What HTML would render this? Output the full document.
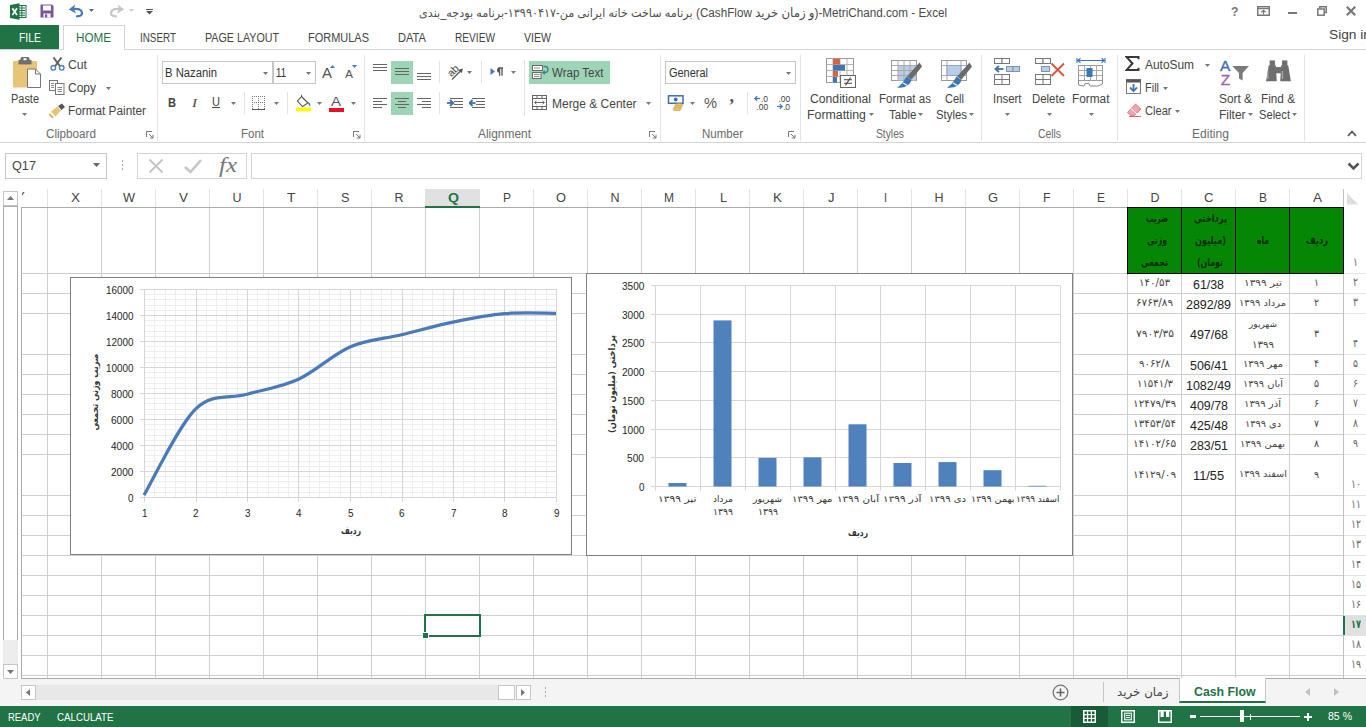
<!DOCTYPE html>
<html lang="fa">
<head>
<meta charset="utf-8">
<title>Excel - Cash Flow</title>
<style>
html,body{margin:0;padding:0}
body{width:1366px;height:727px;overflow:hidden;position:relative;background:#fff;font-family:"Liberation Sans","DejaVu Sans",sans-serif;font-size:12px;color:#444}
.b{position:absolute;display:block}
.t{position:absolute;display:block;white-space:nowrap;transform-origin:0 50%}
#bot{position:absolute;left:0;top:679px;width:1366px;height:27px;background:#f4f4f4}
</style>
</head>
<body>
<div id="bot"></div>
<svg class="b" style="left:0;top:0" width="1366" height="727" viewBox="0 0 1366 727"><rect x="47" y="189" width="1" height="18" fill="#e3e3e3"/><rect x="47" y="207" width="1" height="471" fill="#cecece"/><rect x="101" y="189" width="1" height="18" fill="#e3e3e3"/><rect x="101" y="207" width="1" height="471" fill="#cecece"/><rect x="155" y="189" width="1" height="18" fill="#e3e3e3"/><rect x="155" y="207" width="1" height="471" fill="#cecece"/><rect x="209" y="189" width="1" height="18" fill="#e3e3e3"/><rect x="209" y="207" width="1" height="471" fill="#cecece"/><rect x="263" y="189" width="1" height="18" fill="#e3e3e3"/><rect x="263" y="207" width="1" height="471" fill="#cecece"/><rect x="317" y="189" width="1" height="18" fill="#e3e3e3"/><rect x="317" y="207" width="1" height="471" fill="#cecece"/><rect x="371" y="189" width="1" height="18" fill="#e3e3e3"/><rect x="371" y="207" width="1" height="471" fill="#cecece"/><rect x="425" y="189" width="1" height="18" fill="#e3e3e3"/><rect x="425" y="207" width="1" height="471" fill="#cecece"/><rect x="479" y="189" width="1" height="18" fill="#e3e3e3"/><rect x="479" y="207" width="1" height="471" fill="#cecece"/><rect x="533" y="189" width="1" height="18" fill="#e3e3e3"/><rect x="533" y="207" width="1" height="471" fill="#cecece"/><rect x="587" y="189" width="1" height="18" fill="#e3e3e3"/><rect x="587" y="207" width="1" height="471" fill="#cecece"/><rect x="641" y="189" width="1" height="18" fill="#e3e3e3"/><rect x="641" y="207" width="1" height="471" fill="#cecece"/><rect x="695" y="189" width="1" height="18" fill="#e3e3e3"/><rect x="695" y="207" width="1" height="471" fill="#cecece"/><rect x="749" y="189" width="1" height="18" fill="#e3e3e3"/><rect x="749" y="207" width="1" height="471" fill="#cecece"/><rect x="803" y="189" width="1" height="18" fill="#e3e3e3"/><rect x="803" y="207" width="1" height="471" fill="#cecece"/><rect x="857" y="189" width="1" height="18" fill="#e3e3e3"/><rect x="857" y="207" width="1" height="471" fill="#cecece"/><rect x="911" y="189" width="1" height="18" fill="#e3e3e3"/><rect x="911" y="207" width="1" height="471" fill="#cecece"/><rect x="965" y="189" width="1" height="18" fill="#e3e3e3"/><rect x="965" y="207" width="1" height="471" fill="#cecece"/><rect x="1019" y="189" width="1" height="18" fill="#e3e3e3"/><rect x="1019" y="207" width="1" height="471" fill="#cecece"/><rect x="1073" y="189" width="1" height="18" fill="#e3e3e3"/><rect x="1073" y="207" width="1" height="471" fill="#cecece"/><rect x="1127" y="189" width="1" height="18" fill="#e3e3e3"/><rect x="1127" y="207" width="1" height="471" fill="#cecece"/><rect x="1181" y="189" width="1" height="18" fill="#e3e3e3"/><rect x="1181" y="207" width="1" height="471" fill="#cecece"/><rect x="1235" y="189" width="1" height="18" fill="#e3e3e3"/><rect x="1235" y="207" width="1" height="471" fill="#cecece"/><rect x="1289" y="189" width="1" height="18" fill="#e3e3e3"/><rect x="1289" y="207" width="1" height="471" fill="#cecece"/><rect x="1343" y="189" width="1" height="18" fill="#e3e3e3"/><rect x="1343" y="207" width="1" height="471" fill="#cecece"/><rect x="21" y="273" width="1322" height="1" fill="#cecece"/><rect x="1344" y="273" width="22" height="1" fill="#e3e3e3"/><rect x="21" y="293" width="1322" height="1" fill="#cecece"/><rect x="1344" y="293" width="22" height="1" fill="#e3e3e3"/><rect x="21" y="313" width="1322" height="1" fill="#cecece"/><rect x="1344" y="313" width="22" height="1" fill="#e3e3e3"/><rect x="21" y="354" width="1322" height="1" fill="#cecece"/><rect x="1344" y="354" width="22" height="1" fill="#e3e3e3"/><rect x="21" y="374" width="1322" height="1" fill="#cecece"/><rect x="1344" y="374" width="22" height="1" fill="#e3e3e3"/><rect x="21" y="394" width="1322" height="1" fill="#cecece"/><rect x="1344" y="394" width="22" height="1" fill="#e3e3e3"/><rect x="21" y="414" width="1322" height="1" fill="#cecece"/><rect x="1344" y="414" width="22" height="1" fill="#e3e3e3"/><rect x="21" y="434" width="1322" height="1" fill="#cecece"/><rect x="1344" y="434" width="22" height="1" fill="#e3e3e3"/><rect x="21" y="454" width="1322" height="1" fill="#cecece"/><rect x="1344" y="454" width="22" height="1" fill="#e3e3e3"/><rect x="21" y="495" width="1322" height="1" fill="#cecece"/><rect x="1344" y="495" width="22" height="1" fill="#e3e3e3"/><rect x="21" y="515" width="1322" height="1" fill="#cecece"/><rect x="1344" y="515" width="22" height="1" fill="#e3e3e3"/><rect x="21" y="535" width="1322" height="1" fill="#cecece"/><rect x="1344" y="535" width="22" height="1" fill="#e3e3e3"/><rect x="21" y="555" width="1322" height="1" fill="#cecece"/><rect x="1344" y="555" width="22" height="1" fill="#e3e3e3"/><rect x="21" y="575" width="1322" height="1" fill="#cecece"/><rect x="1344" y="575" width="22" height="1" fill="#e3e3e3"/><rect x="21" y="595" width="1322" height="1" fill="#cecece"/><rect x="1344" y="595" width="22" height="1" fill="#e3e3e3"/><rect x="21" y="615" width="1322" height="1" fill="#cecece"/><rect x="1344" y="615" width="22" height="1" fill="#e3e3e3"/><rect x="21" y="635" width="1322" height="1" fill="#cecece"/><rect x="1344" y="635" width="22" height="1" fill="#e3e3e3"/><rect x="21" y="655" width="1322" height="1" fill="#cecece"/><rect x="1344" y="655" width="22" height="1" fill="#e3e3e3"/><rect x="21" y="675" width="1322" height="1" fill="#cecece"/><rect x="1344" y="675" width="22" height="1" fill="#e3e3e3"/><rect x="21" y="207" width="1323" height="1" fill="#ababab"/><rect x="21" y="207" width="1" height="471" fill="#ababab"/><rect x="21" y="678" width="1345" height="1" fill="#ababab"/><rect x="1343" y="189" width="1" height="489" fill="#c0c0c0"/><path d="M1347 193.5L1358.5 204.5H1347Z" fill="#dedede"/></svg>
<div class="b" style="left:425px;top:189px;width:55px;height:18px;background:#e1e1e1;border-bottom:2px solid #217346;box-sizing:content-box;height:17px"></div>
<span class="t" style="left:70.5px;top:189.5px;line-height:16px;font-size:12.5px;color:#444;transform:scaleX(1.079);">X</span>
<span class="t" style="left:123.0px;top:189.5px;line-height:16px;font-size:12.5px;color:#444;transform:scaleX(1.016);">W</span>
<span class="t" style="left:178.5px;top:189.5px;line-height:16px;font-size:12.5px;color:#444;transform:scaleX(1.079);">V</span>
<span class="t" style="left:232.5px;top:189.5px;line-height:16px;font-size:12.5px;color:#444;">U</span>
<span class="t" style="left:286.75px;top:189.5px;line-height:16px;font-size:12.5px;color:#444;transform:scaleX(1.112);">T</span>
<span class="t" style="left:340.75px;top:189.5px;line-height:16px;font-size:12.5px;color:#444;transform:scaleX(1.019);">S</span>
<span class="t" style="left:394.5px;top:189.5px;line-height:16px;font-size:12.5px;color:#444;">R</span>
<span class="t" style="left:447.5px;top:189.5px;line-height:16px;font-size:12.5px;color:#217346;font-weight:700;transform:scaleX(1.130);">Q</span>
<span class="t" style="left:503.0px;top:189.5px;line-height:16px;font-size:12.5px;color:#444;transform:scaleX(0.959);">P</span>
<span class="t" style="left:556.0px;top:189.5px;line-height:16px;font-size:12.5px;color:#444;transform:scaleX(1.027);">O</span>
<span class="t" style="left:610.5px;top:189.5px;line-height:16px;font-size:12.5px;color:#444;">N</span>
<span class="t" style="left:664.0px;top:189.5px;line-height:16px;font-size:12.5px;color:#444;transform:scaleX(0.960);">M</span>
<span class="t" style="left:719.5px;top:189.5px;line-height:16px;font-size:12.5px;color:#444;transform:scaleX(1.007);">L</span>
<span class="t" style="left:772.5px;top:189.5px;line-height:16px;font-size:12.5px;color:#444;transform:scaleX(1.079);">K</span>
<span class="t" style="left:827.75px;top:189.5px;line-height:16px;font-size:12.5px;color:#444;transform:scaleX(1.040);">J</span>
<span class="t" style="left:883.5px;top:189.5px;line-height:16px;font-size:12.5px;color:#444;transform:scaleX(0.861);">I</span>
<span class="t" style="left:934.5px;top:189.5px;line-height:16px;font-size:12.5px;color:#444;">H</span>
<span class="t" style="left:988.0px;top:189.5px;line-height:16px;font-size:12.5px;color:#444;transform:scaleX(1.027);">G</span>
<span class="t" style="left:1043.25px;top:189.5px;line-height:16px;font-size:12.5px;color:#444;transform:scaleX(0.982);">F</span>
<span class="t" style="left:1097.0px;top:189.5px;line-height:16px;font-size:12.5px;color:#444;transform:scaleX(0.959);">E</span>
<span class="t" style="left:1150.5px;top:189.5px;line-height:16px;font-size:12.5px;color:#444;">D</span>
<span class="t" style="left:1204.25px;top:189.5px;line-height:16px;font-size:12.5px;color:#444;transform:scaleX(1.052);">C</span>
<span class="t" style="left:1259.0px;top:189.5px;line-height:16px;font-size:12.5px;color:#444;transform:scaleX(0.959);">B</span>
<span class="t" style="left:1312.5px;top:189.5px;line-height:16px;font-size:12.5px;color:#444;transform:scaleX(1.079);">A</span>
<div class="b" style="left:22px;top:189px;width:25px;height:18px;overflow:hidden"><span class="t" style="left:-6px;top:-1px;line-height:18px;font-size:13px;color:#444">Y</span></div>
<div class="b" style="left:1343px;top:616px;width:23px;height:19px;background:#e1e1e1;border-left:2px solid #217346;box-sizing:border-box"></div>
<span class="t" dir="rtl" style="left:1353.0px;top:255.0px;line-height:15px;font-size:11.5px;color:#666;font-family:'DejaVu Sans','Liberation Sans',sans-serif;transform:scaleX(0.808);">۱</span>
<span class="t" dir="rtl" style="left:1353.0px;top:275.0px;line-height:15px;font-size:11.5px;color:#666;font-family:'DejaVu Sans','Liberation Sans',sans-serif;transform:scaleX(0.808);">۲</span>
<span class="t" dir="rtl" style="left:1353.0px;top:295.0px;line-height:15px;font-size:11.5px;color:#666;font-family:'DejaVu Sans','Liberation Sans',sans-serif;transform:scaleX(0.808);">۳</span>
<span class="t" dir="rtl" style="left:1353.0px;top:336.0px;line-height:15px;font-size:11.5px;color:#666;font-family:'DejaVu Sans','Liberation Sans',sans-serif;transform:scaleX(0.808);">۴</span>
<span class="t" dir="rtl" style="left:1353.0px;top:356.0px;line-height:15px;font-size:11.5px;color:#666;font-family:'DejaVu Sans','Liberation Sans',sans-serif;transform:scaleX(0.808);">۵</span>
<span class="t" dir="rtl" style="left:1353.0px;top:376.0px;line-height:15px;font-size:11.5px;color:#666;font-family:'DejaVu Sans','Liberation Sans',sans-serif;transform:scaleX(0.808);">۶</span>
<span class="t" dir="rtl" style="left:1353.0px;top:396.0px;line-height:15px;font-size:11.5px;color:#666;font-family:'DejaVu Sans','Liberation Sans',sans-serif;transform:scaleX(0.808);">۷</span>
<span class="t" dir="rtl" style="left:1353.0px;top:416.0px;line-height:15px;font-size:11.5px;color:#666;font-family:'DejaVu Sans','Liberation Sans',sans-serif;transform:scaleX(0.808);">۸</span>
<span class="t" dir="rtl" style="left:1353.0px;top:436.0px;line-height:15px;font-size:11.5px;color:#666;font-family:'DejaVu Sans','Liberation Sans',sans-serif;transform:scaleX(0.808);">۹</span>
<span class="t" dir="rtl" style="left:1350.5px;top:477.0px;line-height:15px;font-size:11.5px;color:#666;font-family:'DejaVu Sans','Liberation Sans',sans-serif;transform:scaleX(0.809);">۱۰</span>
<span class="t" dir="rtl" style="left:1350.5px;top:497.0px;line-height:15px;font-size:11.5px;color:#666;font-family:'DejaVu Sans','Liberation Sans',sans-serif;transform:scaleX(0.809);">۱۱</span>
<span class="t" dir="rtl" style="left:1350.5px;top:517.0px;line-height:15px;font-size:11.5px;color:#666;font-family:'DejaVu Sans','Liberation Sans',sans-serif;transform:scaleX(0.809);">۱۲</span>
<span class="t" dir="rtl" style="left:1350.5px;top:537.0px;line-height:15px;font-size:11.5px;color:#666;font-family:'DejaVu Sans','Liberation Sans',sans-serif;transform:scaleX(0.809);">۱۳</span>
<span class="t" dir="rtl" style="left:1350.5px;top:557.0px;line-height:15px;font-size:11.5px;color:#666;font-family:'DejaVu Sans','Liberation Sans',sans-serif;transform:scaleX(0.809);">۱۴</span>
<span class="t" dir="rtl" style="left:1350.5px;top:577.0px;line-height:15px;font-size:11.5px;color:#666;font-family:'DejaVu Sans','Liberation Sans',sans-serif;transform:scaleX(0.809);">۱۵</span>
<span class="t" dir="rtl" style="left:1350.5px;top:597.0px;line-height:15px;font-size:11.5px;color:#666;font-family:'DejaVu Sans','Liberation Sans',sans-serif;transform:scaleX(0.809);">۱۶</span>
<span class="t" dir="rtl" style="left:1350.5px;top:617.0px;line-height:15px;font-size:11.5px;color:#217346;font-weight:700;font-family:'DejaVu Sans','Liberation Sans',sans-serif;transform:scaleX(0.712);">۱۷</span>
<span class="t" dir="rtl" style="left:1350.5px;top:637.0px;line-height:15px;font-size:11.5px;color:#666;font-family:'DejaVu Sans','Liberation Sans',sans-serif;transform:scaleX(0.809);">۱۸</span>
<span class="t" dir="rtl" style="left:1350.5px;top:657.0px;line-height:15px;font-size:11.5px;color:#666;font-family:'DejaVu Sans','Liberation Sans',sans-serif;transform:scaleX(0.809);">۱۹</span>
<div class="b" style="left:424px;top:614px;width:57px;height:23px;border:2px solid #217346;box-sizing:border-box"></div>
<div class="b" style="left:422px;top:632px;width:7px;height:7px;background:#217346;border:1px solid #fff;box-sizing:border-box"></div>
<div class="b" style="left:1127px;top:207px;width:217px;height:67px;background:#058605;border:1px solid #000;box-sizing:border-box"></div>
<div class="b" style="left:1181px;top:207px;width:1px;height:67px;background:#000"></div>
<div class="b" style="left:1235px;top:207px;width:1px;height:67px;background:#000"></div>
<div class="b" style="left:1289px;top:207px;width:1px;height:67px;background:#000"></div>
<span class="t" dir="rtl" style="left:1305.5px;top:234.0px;line-height:14px;font-size:11px;color:#012b01;font-weight:700;font-family:'DejaVu Sans','Liberation Sans',sans-serif;transform:scaleX(0.753);">ردیف</span>
<span class="t" dir="rtl" style="left:1256.5px;top:234.0px;line-height:14px;font-size:11px;color:#012b01;font-weight:700;font-family:'DejaVu Sans','Liberation Sans',sans-serif;transform:scaleX(0.688);">ماه</span>
<span class="t" dir="rtl" style="left:1193.5px;top:212.0px;line-height:14px;font-size:11px;color:#012b01;font-weight:700;font-family:'DejaVu Sans','Liberation Sans',sans-serif;transform:scaleX(0.751);">پرداختی</span>
<span class="t" dir="rtl" style="left:1195.0px;top:234.0px;line-height:14px;font-size:11px;color:#012b01;font-weight:700;font-family:'DejaVu Sans','Liberation Sans',sans-serif;transform:scaleX(0.745);">(میلیون</span>
<span class="t" dir="rtl" style="left:1196.5px;top:256.0px;line-height:14px;font-size:11px;color:#012b01;font-weight:700;font-family:'DejaVu Sans','Liberation Sans',sans-serif;transform:scaleX(0.714);">تومان)</span>
<span class="t" dir="rtl" style="left:1146.0px;top:212.0px;line-height:14px;font-size:11px;color:#012b01;font-weight:700;font-family:'DejaVu Sans','Liberation Sans',sans-serif;transform:scaleX(0.662);">ضریب</span>
<span class="t" dir="rtl" style="left:1146.5px;top:234.0px;line-height:14px;font-size:11px;color:#012b01;font-weight:700;font-family:'DejaVu Sans','Liberation Sans',sans-serif;transform:scaleX(0.703);">وزنی</span>
<span class="t" dir="rtl" style="left:1141.0px;top:256.0px;line-height:14px;font-size:11px;color:#012b01;font-weight:700;font-family:'DejaVu Sans','Liberation Sans',sans-serif;transform:scaleX(0.734);">تجمعی</span>
<span class="t" dir="rtl" style="left:1314.0px;top:276.0px;line-height:13px;font-size:10px;color:#444;font-family:'DejaVu Sans','Liberation Sans',sans-serif;transform:scaleX(0.930);">۱</span>
<span class="t" dir="rtl" style="left:1243.5px;top:276.5px;line-height:12px;font-size:9.5px;color:#444;font-family:'DejaVu Sans','Liberation Sans',sans-serif;transform:scaleX(1.111);">تیر ۱۳۹۹</span>
<span class="t" style="left:1193.0px;top:276.5px;line-height:16px;font-size:12.5px;color:#222;transform:scaleX(0.991);">61/38</span>
<span class="t" dir="rtl" style="left:1139.0px;top:276.0px;line-height:13px;font-size:10px;color:#444;font-family:'DejaVu Sans','Liberation Sans',sans-serif;transform:scaleX(1.025);">۱۴۰/۵۳</span>
<span class="t" dir="rtl" style="left:1314.0px;top:296.0px;line-height:13px;font-size:10px;color:#444;font-family:'DejaVu Sans','Liberation Sans',sans-serif;transform:scaleX(0.930);">۲</span>
<span class="t" dir="rtl" style="left:1239.0px;top:296.5px;line-height:12px;font-size:9.5px;color:#444;font-family:'DejaVu Sans','Liberation Sans',sans-serif;transform:scaleX(1.047);">مرداد ۱۳۹۹</span>
<span class="t" style="left:1186.0px;top:296.5px;line-height:16px;font-size:12.5px;color:#222;transform:scaleX(0.996);">2892/89</span>
<span class="t" dir="rtl" style="left:1136.0px;top:296.0px;line-height:13px;font-size:10px;color:#444;font-family:'DejaVu Sans','Liberation Sans',sans-serif;transform:scaleX(1.039);">۶۷۶۳/۸۹</span>
<span class="t" dir="rtl" style="left:1314.0px;top:326.5px;line-height:13px;font-size:10px;color:#444;font-family:'DejaVu Sans','Liberation Sans',sans-serif;transform:scaleX(0.930);">۳</span>
<span class="t" dir="rtl" style="left:1248.5px;top:318.0px;line-height:12px;font-size:9px;color:#444;font-family:'DejaVu Sans','Liberation Sans',sans-serif;transform:scaleX(0.994);">شهریور</span>
<span class="t" dir="rtl" style="left:1251.5px;top:337.5px;line-height:13px;font-size:10px;color:#444;font-family:'DejaVu Sans','Liberation Sans',sans-serif;transform:scaleX(1.024);">۱۳۹۹</span>
<span class="t" style="left:1189.5px;top:327.0px;line-height:16px;font-size:12.5px;color:#222;transform:scaleX(0.994);">497/68</span>
<span class="t" dir="rtl" style="left:1135.5px;top:326.5px;line-height:13px;font-size:10px;color:#444;font-family:'DejaVu Sans','Liberation Sans',sans-serif;transform:scaleX(1.067);">۷۹۰۳/۳۵</span>
<span class="t" dir="rtl" style="left:1314.0px;top:357.0px;line-height:13px;font-size:10px;color:#444;font-family:'DejaVu Sans','Liberation Sans',sans-serif;transform:scaleX(0.930);">۴</span>
<span class="t" dir="rtl" style="left:1242.5px;top:357.5px;line-height:12px;font-size:9.5px;color:#444;font-family:'DejaVu Sans','Liberation Sans',sans-serif;transform:scaleX(1.048);">مهر ۱۳۹۹</span>
<span class="t" style="left:1189.5px;top:357.5px;line-height:16px;font-size:12.5px;color:#222;transform:scaleX(0.994);">506/41</span>
<span class="t" dir="rtl" style="left:1139.0px;top:357.0px;line-height:13px;font-size:10px;color:#444;font-family:'DejaVu Sans','Liberation Sans',sans-serif;transform:scaleX(1.025);">۹۰۶۲/۸</span>
<span class="t" dir="rtl" style="left:1314.0px;top:377.0px;line-height:13px;font-size:10px;color:#444;font-family:'DejaVu Sans','Liberation Sans',sans-serif;transform:scaleX(0.930);">۵</span>
<span class="t" dir="rtl" style="left:1242.5px;top:377.5px;line-height:12px;font-size:9.5px;color:#444;font-family:'DejaVu Sans','Liberation Sans',sans-serif;transform:scaleX(1.036);">آبان ۱۳۹۹</span>
<span class="t" style="left:1186.0px;top:377.5px;line-height:16px;font-size:12.5px;color:#222;transform:scaleX(0.996);">1082/49</span>
<span class="t" dir="rtl" style="left:1136.5px;top:377.0px;line-height:13px;font-size:10px;color:#444;font-family:'DejaVu Sans','Liberation Sans',sans-serif;transform:scaleX(1.011);">۱۱۵۴۱/۳</span>
<span class="t" dir="rtl" style="left:1314.0px;top:397.0px;line-height:13px;font-size:10px;color:#444;font-family:'DejaVu Sans','Liberation Sans',sans-serif;transform:scaleX(0.930);">۶</span>
<span class="t" dir="rtl" style="left:1244.0px;top:397.5px;line-height:12px;font-size:9.5px;color:#444;font-family:'DejaVu Sans','Liberation Sans',sans-serif;transform:scaleX(1.060);">آذر ۱۳۹۹</span>
<span class="t" style="left:1189.5px;top:397.5px;line-height:16px;font-size:12.5px;color:#222;transform:scaleX(0.994);">409/78</span>
<span class="t" dir="rtl" style="left:1133.0px;top:397.0px;line-height:13px;font-size:10px;color:#444;font-family:'DejaVu Sans','Liberation Sans',sans-serif;transform:scaleX(1.050);">۱۲۴۷۹/۳۹</span>
<span class="t" dir="rtl" style="left:1314.0px;top:417.0px;line-height:13px;font-size:10px;color:#444;font-family:'DejaVu Sans','Liberation Sans',sans-serif;transform:scaleX(0.930);">۷</span>
<span class="t" dir="rtl" style="left:1244.5px;top:417.5px;line-height:12px;font-size:9.5px;color:#444;font-family:'DejaVu Sans','Liberation Sans',sans-serif;transform:scaleX(1.025);">دی ۱۳۹۹</span>
<span class="t" style="left:1189.5px;top:417.5px;line-height:16px;font-size:12.5px;color:#222;transform:scaleX(0.994);">425/48</span>
<span class="t" dir="rtl" style="left:1133.0px;top:417.0px;line-height:13px;font-size:10px;color:#444;font-family:'DejaVu Sans','Liberation Sans',sans-serif;transform:scaleX(1.050);">۱۳۴۵۳/۵۴</span>
<span class="t" dir="rtl" style="left:1314.0px;top:437.0px;line-height:13px;font-size:10px;color:#444;font-family:'DejaVu Sans','Liberation Sans',sans-serif;transform:scaleX(0.930);">۸</span>
<span class="t" dir="rtl" style="left:1240.0px;top:437.5px;line-height:12px;font-size:9.5px;color:#444;font-family:'DejaVu Sans','Liberation Sans',sans-serif;transform:scaleX(1.042);">بهمن ۱۳۹۹</span>
<span class="t" style="left:1189.5px;top:437.5px;line-height:16px;font-size:12.5px;color:#222;transform:scaleX(0.994);">283/51</span>
<span class="t" dir="rtl" style="left:1133.0px;top:437.0px;line-height:13px;font-size:10px;color:#444;font-family:'DejaVu Sans','Liberation Sans',sans-serif;transform:scaleX(1.050);">۱۴۱۰۲/۶۵</span>
<span class="t" dir="rtl" style="left:1314.0px;top:467.5px;line-height:13px;font-size:10px;color:#444;font-family:'DejaVu Sans','Liberation Sans',sans-serif;transform:scaleX(0.930);">۹</span>
<span class="t" dir="rtl" style="left:1238.5px;top:468.0px;line-height:12px;font-size:9.5px;color:#444;font-family:'DejaVu Sans','Liberation Sans',sans-serif;transform:scaleX(1.028);">اسفند ۱۳۹۹</span>
<span class="t" style="left:1193.0px;top:468.0px;line-height:16px;font-size:12.5px;color:#222;transform:scaleX(1.021);">11/55</span>
<span class="t" dir="rtl" style="left:1133.0px;top:467.5px;line-height:13px;font-size:10px;color:#444;font-family:'DejaVu Sans','Liberation Sans',sans-serif;transform:scaleX(1.050);">۱۴۱۲۹/۰۹</span>
<div class="b" style="left:70px;top:277px;width:502px;height:278px;background:#fff;border:1px solid #808080;box-sizing:border-box"></div>
<svg class="b" style="left:0;top:0" width="1366" height="727" viewBox="0 0 1366 727"><path d="M154.5 289V497" stroke="#eeeeee"/><path d="M165.5 289V497" stroke="#eeeeee"/><path d="M175.5 289V497" stroke="#eeeeee"/><path d="M185.5 289V497" stroke="#eeeeee"/><path d="M206.5 289V497" stroke="#eeeeee"/><path d="M216.5 289V497" stroke="#eeeeee"/><path d="M226.5 289V497" stroke="#eeeeee"/><path d="M237.5 289V497" stroke="#eeeeee"/><path d="M257.5 289V497" stroke="#eeeeee"/><path d="M268.5 289V497" stroke="#eeeeee"/><path d="M278.5 289V497" stroke="#eeeeee"/><path d="M288.5 289V497" stroke="#eeeeee"/><path d="M309.5 289V497" stroke="#eeeeee"/><path d="M319.5 289V497" stroke="#eeeeee"/><path d="M329.5 289V497" stroke="#eeeeee"/><path d="M340.5 289V497" stroke="#eeeeee"/><path d="M360.5 289V497" stroke="#eeeeee"/><path d="M371.5 289V497" stroke="#eeeeee"/><path d="M381.5 289V497" stroke="#eeeeee"/><path d="M391.5 289V497" stroke="#eeeeee"/><path d="M412.5 289V497" stroke="#eeeeee"/><path d="M422.5 289V497" stroke="#eeeeee"/><path d="M432.5 289V497" stroke="#eeeeee"/><path d="M443.5 289V497" stroke="#eeeeee"/><path d="M463.5 289V497" stroke="#eeeeee"/><path d="M474.5 289V497" stroke="#eeeeee"/><path d="M484.5 289V497" stroke="#eeeeee"/><path d="M494.5 289V497" stroke="#eeeeee"/><path d="M515.5 289V497" stroke="#eeeeee"/><path d="M525.5 289V497" stroke="#eeeeee"/><path d="M535.5 289V497" stroke="#eeeeee"/><path d="M546.5 289V497" stroke="#eeeeee"/><path d="M144 294.5H556" stroke="#eeeeee"/><path d="M144 299.5H556" stroke="#eeeeee"/><path d="M144 305.5H556" stroke="#eeeeee"/><path d="M144 310.5H556" stroke="#eeeeee"/><path d="M144 320.5H556" stroke="#eeeeee"/><path d="M144 325.5H556" stroke="#eeeeee"/><path d="M144 331.5H556" stroke="#eeeeee"/><path d="M144 336.5H556" stroke="#eeeeee"/><path d="M144 346.5H556" stroke="#eeeeee"/><path d="M144 351.5H556" stroke="#eeeeee"/><path d="M144 357.5H556" stroke="#eeeeee"/><path d="M144 362.5H556" stroke="#eeeeee"/><path d="M144 372.5H556" stroke="#eeeeee"/><path d="M144 377.5H556" stroke="#eeeeee"/><path d="M144 383.5H556" stroke="#eeeeee"/><path d="M144 388.5H556" stroke="#eeeeee"/><path d="M144 398.5H556" stroke="#eeeeee"/><path d="M144 403.5H556" stroke="#eeeeee"/><path d="M144 409.5H556" stroke="#eeeeee"/><path d="M144 414.5H556" stroke="#eeeeee"/><path d="M144 424.5H556" stroke="#eeeeee"/><path d="M144 429.5H556" stroke="#eeeeee"/><path d="M144 435.5H556" stroke="#eeeeee"/><path d="M144 440.5H556" stroke="#eeeeee"/><path d="M144 450.5H556" stroke="#eeeeee"/><path d="M144 455.5H556" stroke="#eeeeee"/><path d="M144 461.5H556" stroke="#eeeeee"/><path d="M144 466.5H556" stroke="#eeeeee"/><path d="M144 476.5H556" stroke="#eeeeee"/><path d="M144 481.5H556" stroke="#eeeeee"/><path d="M144 487.5H556" stroke="#eeeeee"/><path d="M144 492.5H556" stroke="#eeeeee"/><path d="M144.5 289V502" stroke="#d6d6d6"/><path d="M140 289.5H557" stroke="#d6d6d6"/><path d="M196.5 289V502" stroke="#d6d6d6"/><path d="M140 315.5H557" stroke="#d6d6d6"/><path d="M247.5 289V502" stroke="#d6d6d6"/><path d="M140 341.5H557" stroke="#d6d6d6"/><path d="M298.5 289V502" stroke="#d6d6d6"/><path d="M140 367.5H557" stroke="#d6d6d6"/><path d="M350.5 289V502" stroke="#d6d6d6"/><path d="M140 393.5H557" stroke="#d6d6d6"/><path d="M402.5 289V502" stroke="#d6d6d6"/><path d="M140 419.5H557" stroke="#d6d6d6"/><path d="M453.5 289V502" stroke="#d6d6d6"/><path d="M140 445.5H557" stroke="#d6d6d6"/><path d="M504.5 289V502" stroke="#d6d6d6"/><path d="M140 471.5H557" stroke="#d6d6d6"/><path d="M556.5 289V502" stroke="#d6d6d6"/><path d="M140 497.5H557" stroke="#d6d6d6"/><path d="M144.00 495.17C152.58 480.82 178.33 425.89 195.50 409.07C212.67 392.25 229.83 399.24 247.00 394.26C264.17 389.28 281.33 387.07 298.50 379.18C315.67 371.30 332.83 354.37 350.00 346.96C367.17 339.56 384.33 338.91 401.50 334.77C418.67 330.62 435.83 325.62 453.00 322.10C470.17 318.59 487.33 315.13 504.50 313.67C521.67 312.20 547.42 313.38 556.00 313.32" fill="none" stroke="#4a7ab7" stroke-width="3.2" stroke-linecap="butt"/></svg>
<span class="t" style="left:106.0px;top:282.5px;line-height:14px;font-size:10.5px;color:#262626;transform:scaleX(0.942);">16000</span>
<span class="t" style="left:141.5px;top:506.0px;line-height:14px;font-size:10.5px;color:#262626;transform:scaleX(0.941);">1</span>
<span class="t" style="left:106.0px;top:308.5px;line-height:14px;font-size:10.5px;color:#262626;transform:scaleX(0.942);">14000</span>
<span class="t" style="left:193.0px;top:506.0px;line-height:14px;font-size:10.5px;color:#262626;transform:scaleX(0.941);">2</span>
<span class="t" style="left:106.0px;top:334.5px;line-height:14px;font-size:10.5px;color:#262626;transform:scaleX(0.942);">12000</span>
<span class="t" style="left:244.5px;top:506.0px;line-height:14px;font-size:10.5px;color:#262626;transform:scaleX(0.941);">3</span>
<span class="t" style="left:106.0px;top:360.5px;line-height:14px;font-size:10.5px;color:#262626;transform:scaleX(0.942);">10000</span>
<span class="t" style="left:296.0px;top:506.0px;line-height:14px;font-size:10.5px;color:#262626;transform:scaleX(0.941);">4</span>
<span class="t" style="left:111.0px;top:386.5px;line-height:14px;font-size:10.5px;color:#262626;transform:scaleX(0.963);">8000</span>
<span class="t" style="left:347.5px;top:506.0px;line-height:14px;font-size:10.5px;color:#262626;transform:scaleX(0.941);">5</span>
<span class="t" style="left:111.0px;top:412.5px;line-height:14px;font-size:10.5px;color:#262626;transform:scaleX(0.963);">6000</span>
<span class="t" style="left:399.0px;top:506.0px;line-height:14px;font-size:10.5px;color:#262626;transform:scaleX(0.941);">6</span>
<span class="t" style="left:111.0px;top:438.5px;line-height:14px;font-size:10.5px;color:#262626;transform:scaleX(0.963);">4000</span>
<span class="t" style="left:450.5px;top:506.0px;line-height:14px;font-size:10.5px;color:#262626;transform:scaleX(0.941);">7</span>
<span class="t" style="left:111.0px;top:464.5px;line-height:14px;font-size:10.5px;color:#262626;transform:scaleX(0.963);">2000</span>
<span class="t" style="left:502.0px;top:506.0px;line-height:14px;font-size:10.5px;color:#262626;transform:scaleX(0.941);">8</span>
<span class="t" style="left:128.0px;top:490.5px;line-height:14px;font-size:10.5px;color:#262626;transform:scaleX(0.941);">0</span>
<span class="t" style="left:553.5px;top:506.0px;line-height:14px;font-size:10.5px;color:#262626;transform:scaleX(0.941);">9</span>
<span class="t" dir="rtl" style="left:341px;top:523.5px;line-height:13px;font-size:10px;color:#333;font-weight:700;font-family:'DejaVu Sans','Liberation Sans',sans-serif;transform:scaleX(0.753);">ردیف</span>
<div class="b" style="left:94.5px;top:391.5px;width:0;height:0"><span class="t" id="c1y" style="left:-80px;top:-8px;width:160px;text-align:center;line-height:16px;font-size:9.5px;font-weight:700;color:#333;font-family:'DejaVu Sans','Liberation Sans',sans-serif;transform:rotate(-90deg) scaleX(0.84);transform-origin:50% 50%" dir="rtl">ضریب وزنی تجمعی</span></div>
<div class="b" style="left:586px;top:273px;width:487px;height:283px;background:#fff;border:1px solid #808080;box-sizing:border-box"></div>
<svg class="b" style="left:0;top:0" width="1366" height="727" viewBox="0 0 1366 727"><path d="M651 285.5H1060" stroke="#d6d6d6"/><path d="M651 314.5H1060" stroke="#d6d6d6"/><path d="M651 342.5H1060" stroke="#d6d6d6"/><path d="M651 371.5H1060" stroke="#d6d6d6"/><path d="M651 400.5H1060" stroke="#d6d6d6"/><path d="M651 429.5H1060" stroke="#d6d6d6"/><path d="M651 457.5H1060" stroke="#d6d6d6"/><path d="M651 486.5H1060" stroke="#d6d6d6"/><path d="M655.5 285.5V490.5" stroke="#d6d6d6"/><path d="M700.5 285.5V490.5" stroke="#d6d6d6"/><path d="M745.5 285.5V490.5" stroke="#d6d6d6"/><path d="M790.5 285.5V490.5" stroke="#d6d6d6"/><path d="M835.5 285.5V490.5" stroke="#d6d6d6"/><path d="M880.5 285.5V490.5" stroke="#d6d6d6"/><path d="M925.5 285.5V490.5" stroke="#d6d6d6"/><path d="M970.5 285.5V490.5" stroke="#d6d6d6"/><path d="M1015.5 285.5V490.5" stroke="#d6d6d6"/><path d="M1060.5 285.5V490.5" stroke="#d6d6d6"/><rect x="668.5" y="483.0" width="18" height="3.5" fill="#4f81bd"/><rect x="713.5" y="320.4" width="18" height="166.1" fill="#4f81bd"/><rect x="758.5" y="457.9" width="18" height="28.6" fill="#4f81bd"/><rect x="803.5" y="457.4" width="18" height="29.1" fill="#4f81bd"/><rect x="848.5" y="424.3" width="18" height="62.2" fill="#4f81bd"/><rect x="893.5" y="463.0" width="18" height="23.5" fill="#4f81bd"/><rect x="938.5" y="462.1" width="18" height="24.4" fill="#4f81bd"/><rect x="983.5" y="470.2" width="18" height="16.3" fill="#4f81bd"/><rect x="1028.5" y="485.8" width="18" height="0.7" fill="#4f81bd"/></svg>
<span class="t" style="left:621.5px;top:279.0px;line-height:14px;font-size:10.5px;color:#262626;transform:scaleX(0.963);">3500</span>
<span class="t" style="left:621.5px;top:307.7px;line-height:14px;font-size:10.5px;color:#262626;transform:scaleX(0.963);">3000</span>
<span class="t" style="left:621.5px;top:336.4px;line-height:14px;font-size:10.5px;color:#262626;transform:scaleX(0.963);">2500</span>
<span class="t" style="left:621.5px;top:365.1px;line-height:14px;font-size:10.5px;color:#262626;transform:scaleX(0.963);">2000</span>
<span class="t" style="left:621.5px;top:393.9px;line-height:14px;font-size:10.5px;color:#262626;transform:scaleX(0.963);">1500</span>
<span class="t" style="left:621.5px;top:422.6px;line-height:14px;font-size:10.5px;color:#262626;transform:scaleX(0.963);">1000</span>
<span class="t" style="left:627px;top:451.3px;line-height:14px;font-size:10.5px;color:#262626;transform:scaleX(0.970);">500</span>
<span class="t" style="left:638.5px;top:480.0px;line-height:14px;font-size:10.5px;color:#262626;transform:scaleX(0.941);">0</span>
<span class="t" dir="rtl" style="left:658.25px;top:493.0px;line-height:12px;font-size:9px;color:#333;font-family:'DejaVu Sans','Liberation Sans',sans-serif;transform:scaleX(1.188);">تیر ۱۳۹۹</span>
<span class="t" dir="rtl" style="left:712.5px;top:493.0px;line-height:12px;font-size:9px;color:#333;font-family:'DejaVu Sans','Liberation Sans',sans-serif;transform:scaleX(0.985);">مرداد</span>
<span class="t" dir="rtl" style="left:712.5px;top:505.5px;line-height:12px;font-size:9.5px;color:#333;font-family:'DejaVu Sans','Liberation Sans',sans-serif;transform:scaleX(0.979);">۱۳۹۹</span>
<span class="t" dir="rtl" style="left:753.0px;top:493.0px;line-height:12px;font-size:9px;color:#333;font-family:'DejaVu Sans','Liberation Sans',sans-serif;transform:scaleX(1.030);">شهریور</span>
<span class="t" dir="rtl" style="left:757.5px;top:505.5px;line-height:12px;font-size:9.5px;color:#333;font-family:'DejaVu Sans','Liberation Sans',sans-serif;transform:scaleX(0.979);">۱۳۹۹</span>
<span class="t" dir="rtl" style="left:792.25px;top:493.0px;line-height:12px;font-size:9px;color:#333;font-family:'DejaVu Sans','Liberation Sans',sans-serif;transform:scaleX(1.121);">مهر ۱۳۹۹</span>
<span class="t" dir="rtl" style="left:836.5px;top:493.0px;line-height:12px;font-size:9px;color:#333;font-family:'DejaVu Sans','Liberation Sans',sans-serif;transform:scaleX(1.149);">آبان ۱۳۹۹</span>
<span class="t" dir="rtl" style="left:883.25px;top:493.0px;line-height:12px;font-size:9px;color:#333;font-family:'DejaVu Sans','Liberation Sans',sans-serif;transform:scaleX(1.164);">آذر ۱۳۹۹</span>
<span class="t" dir="rtl" style="left:929.0px;top:493.0px;line-height:12px;font-size:9px;color:#333;font-family:'DejaVu Sans','Liberation Sans',sans-serif;transform:scaleX(1.112);">دی ۱۳۹۹</span>
<span class="t" dir="rtl" style="left:970.75px;top:493.0px;line-height:12px;font-size:9px;color:#333;font-family:'DejaVu Sans','Liberation Sans',sans-serif;transform:scaleX(1.063);">بهمن ۱۳۹۹</span>
<span class="t" dir="rtl" style="left:1015.75px;top:493.0px;line-height:12px;font-size:9px;color:#333;font-family:'DejaVu Sans','Liberation Sans',sans-serif;transform:scaleX(0.983);">اسفند ۱۳۹۹</span>
<span class="t" dir="rtl" style="left:848px;top:525.5px;line-height:13px;font-size:10px;color:#333;font-weight:700;font-family:'DejaVu Sans','Liberation Sans',sans-serif;transform:scaleX(0.753);">ردیف</span>
<div class="b" style="left:611.5px;top:384px;width:0;height:0"><span class="t" id="c2y" style="left:-80px;top:-8px;width:160px;text-align:center;line-height:16px;font-size:9.5px;font-weight:700;color:#333;font-family:'DejaVu Sans','Liberation Sans',sans-serif;transform:rotate(-90deg) scaleX(0.875);transform-origin:50% 50%" dir="rtl">پرداختی (میلیون تومان)</span></div>
<div class="b" style="left:3px;top:191px;width:15px;height:15px;border:1px solid #c6c6c6;box-sizing:border-box;background:#fff"></div>
<svg class="b" style="left:7px;top:196px;" width="7" height="4" viewBox="0 0 7 4"><path d="M0 4L3.5 0L7 4Z" fill="#777"/></svg>
<div class="b" style="left:3px;top:206px;width:15px;height:435px;border:1px solid #ababab;box-sizing:border-box;background:#fff"></div>
<div class="b" style="left:3px;top:640px;width:15px;height:24px;background:#ededed"></div>
<div class="b" style="left:3px;top:664px;width:15px;height:15px;border:1px solid #c6c6c6;box-sizing:border-box;background:#fff"></div>
<svg class="b" style="left:7px;top:670px;" width="7" height="4" viewBox="0 0 7 4"><path d="M0 0L3.5 4L7 0Z" fill="#777"/></svg>
<div class="b" style="left:21px;top:685px;width:15px;height:15px;border:1px solid #c6c6c6;box-sizing:border-box;background:#fff"></div>
<svg class="b" style="left:26px;top:689px;" width="4" height="7" viewBox="0 0 4 7"><path d="M4 0L0 3.5L4 7Z" fill="#777"/></svg>
<div class="b" style="left:36px;top:685px;width:462px;height:15px;background:#e8e8e8"></div>
<div class="b" style="left:498px;top:685px;width:17px;height:15px;border:1px solid #c6c6c6;box-sizing:border-box;background:#fff"></div>
<div class="b" style="left:516px;top:685px;width:15px;height:15px;border:1px solid #c6c6c6;box-sizing:border-box;background:#fff"></div>
<svg class="b" style="left:521px;top:689px;" width="4" height="7" viewBox="0 0 4 7"><path d="M0 0L4 3.5L0 7Z" fill="#777"/></svg>
<div class="b" style="left:545px;top:687px;width:1px;height:2px;background:#aaa"></div>
<div class="b" style="left:545px;top:691px;width:1px;height:2px;background:#aaa"></div>
<div class="b" style="left:545px;top:695px;width:1px;height:2px;background:#aaa"></div>
<svg class="b" style="left:1051.5px;top:683.5px;" width="17" height="17" viewBox="0 0 17 17"><circle cx="8.5" cy="8.5" r="7.3" fill="none" stroke="#777" stroke-width="1.3"/><path d="M4.5 8.5H12.5M8.5 4.5V12.5" stroke="#666" stroke-width="1.6"/></svg>
<div class="b" style="left:1103px;top:682px;width:1px;height:20px;background:#c6c6c6"></div>
<span class="t" dir="rtl" style="left:1117px;top:683.5px;line-height:16px;font-size:12px;color:#444;font-family:'DejaVu Sans','Liberation Sans',sans-serif;transform:scaleX(0.987);">زمان خرید</span>
<div class="b" style="left:1179px;top:678px;width:87px;height:25px;background:#fff;border:1px solid #c6c6c6;border-top:none;border-bottom:2px solid #217346;box-sizing:border-box"></div>
<span class="t" style="left:1193.5px;top:682.5px;line-height:17px;font-size:13px;color:#217346;font-weight:700;transform:scaleX(0.946);">Cash Flow</span>
<svg class="b" style="left:1305px;top:688px;" width="5" height="8" viewBox="0 0 5 8"><path d="M5 0L0 4L5 8Z" fill="#c0c0c0"/></svg>
<svg class="b" style="left:1334px;top:688px;" width="5" height="8" viewBox="0 0 5 8"><path d="M0 0L5 4L0 8Z" fill="#c0c0c0"/></svg>
<div class="b" style="left:0px;top:706px;width:1366px;height:21px;background:#217346"></div>
<span class="t" style="left:7.5px;top:709.5px;line-height:15px;font-size:11.5px;color:#fff;transform:scaleX(0.820);">READY</span>
<span class="t" style="left:56.5px;top:709.5px;line-height:15px;font-size:11.5px;color:#fff;transform:scaleX(0.845);">CALCULATE</span>
<div class="b" style="left:1071px;top:706px;width:37px;height:21px;background:#185c37"></div>
<svg class="b" style="left:1083px;top:710px;" width="13" height="13" viewBox="0 0 13 13"><rect x="0.75" y="0.75" width="11.5" height="11.5" fill="none" stroke="#fff" stroke-width="1.5"/><path d="M4.6 0.75V12.25M8.4 0.75V12.25M0.75 4.6H12.25M0.75 8.4H12.25" stroke="#fff" stroke-width="1.1"/></svg>
<svg class="b" style="left:1121px;top:710px;" width="14" height="13" viewBox="0 0 14 13"><rect x="0.75" y="0.75" width="12.5" height="11.5" fill="none" stroke="#fff" stroke-width="1.5"/><rect x="3.7" y="3.2" width="6.6" height="6.6" fill="none" stroke="#fff" stroke-width="1.1"/><path d="M5 5.4H9M5 7.6H9" stroke="#fff" stroke-width="1"/></svg>
<svg class="b" style="left:1158px;top:710px;" width="14" height="13" viewBox="0 0 14 13"><rect x="0.75" y="0.75" width="12.5" height="11.5" fill="none" stroke="#fff" stroke-width="1.5"/><rect x="2.5" y="1" width="3.2" height="6" fill="#fff"/><rect x="8" y="1" width="3.2" height="6" fill="#fff"/></svg>
<div class="b" style="left:1190px;top:715px;width:6px;height:2.5px;background:#fff"></div>
<div class="b" style="left:1200px;top:716px;width:100px;height:1px;background:#fff"></div>
<div class="b" style="left:1240px;top:710px;width:3.5px;height:11.5px;background:#fff"></div>
<div class="b" style="left:1250px;top:713.5px;width:1px;height:6px;background:#fff"></div>
<div class="b" style="left:1304px;top:715.5px;width:8px;height:2.5px;background:#fff"></div>
<div class="b" style="left:1306.8px;top:712.8px;width:2.5px;height:8px;background:#fff"></div>
<span class="t" style="left:1328px;top:708.8px;line-height:15px;font-size:11.5px;color:#fff;transform:scaleX(0.915);">85 %</span>
<svg class="b" style="left:9px;top:3px;" width="18" height="17" viewBox="0 0 18 17">
<rect x="8" y="2.5" width="9" height="12" fill="#fff" stroke="#217346" stroke-width="1"/>
<path d="M10 5H16M10 7.5H16M10 10H16M10 12.3H16M12.8 3v11" stroke="#217346" stroke-width="1" fill="none"/>
<path d="M1 2L10.5 0.3V16.7L1 15Z" fill="#217346"/>
<path d="M3.4 5.2L8 12M8 5.2L3.4 12" stroke="#fff" stroke-width="1.7" fill="none"/></svg>
<svg class="b" style="left:40px;top:4px;" width="14" height="14" viewBox="0 0 14 14">
<path d="M0.5 0.5H12L13.5 2V13.5H0.5Z" fill="#7c559f"/>
<rect x="3" y="1.5" width="8" height="5" fill="#fff"/>
<rect x="3.5" y="9.5" width="7" height="4" fill="#fff"/>
<rect x="5" y="10.3" width="2.2" height="3.2" fill="#7c559f"/></svg>
<svg class="b" style="left:68px;top:4px;" width="17" height="14" viewBox="0 0 17 14">
<path d="M6.5 5C11 4.6 14 6.3 14 9C14 11.3 12 12.3 9 12.3" fill="none" stroke="#4a78b8" stroke-width="2.2" stroke-linecap="round"/>
<path d="M0.8 5.6L7.2 0.6L6 5L8 9.6Z" fill="#4a78b8"/></svg>
<svg class="b" style="left:89.0px;top:9.0px" width="5" height="3" viewBox="0 0 5 3"><path d="M0 0H5L2.5 3Z" fill="#666"/></svg>
<svg class="b" style="left:108px;top:4px;" width="17" height="14" viewBox="0 0 17 14">
<path d="M10.5 5C6 4.6 3 6.3 3 9C3 11.3 5 12.3 8 12.3" fill="none" stroke="#c6c6c6" stroke-width="2.2" stroke-linecap="round"/>
<path d="M16.2 5.6L9.8 0.6L11 5L9 9.6Z" fill="#c6c6c6"/></svg>
<svg class="b" style="left:128.8px;top:9.0px" width="5" height="3" viewBox="0 0 5 3"><path d="M0 0H5L2.5 3Z" fill="#cfcfcf"/></svg>
<div class="b" style="left:146px;top:9px;width:7px;height:1px;background:#555"></div>
<svg class="b" style="left:146.0px;top:11.2px" width="7" height="3.5" viewBox="0 0 7 3.5"><path d="M0 0H7L3.5 3.5Z" fill="#555"/></svg>
<span class="t" style="left:418.5px;top:3.5px;line-height:18px;font-size:12px;color:#505050;transform:scaleX(0.933);">برنامه ساخت خانه ایرانی من-۱۳۹۹۰۴۱۷-برنامه بودجه_بندی</span>
<span class="t" style="left:696px;top:3.5px;line-height:18px;font-size:12.5px;color:#4a4a4a;transform:scaleX(0.936);">(CashFlow و زمان خرید)-MetriChand.com - Excel</span>
<span class="t" style="left:1231px;top:3.0px;line-height:17px;font-size:13px;color:#777;font-weight:700;transform:scaleX(0.943);">?</span>
<svg class="b" style="left:1257px;top:6px;" width="13" height="10" viewBox="0 0 13 10"><rect x="0.75" y="0.75" width="11.5" height="8.5" fill="none" stroke="#777" stroke-width="1.5"/><path d="M1 2.6H12" stroke="#777" stroke-width="1.2"/><path d="M6.5 4.3V8.5M4.3 6.3L6.5 4.3L8.7 6.3" stroke="#777" fill="none" stroke-width="1.2"/></svg>
<div class="b" style="left:1288px;top:12px;width:9px;height:2px;background:#777"></div>
<svg class="b" style="left:1317px;top:6px;" width="10" height="10" viewBox="0 0 10 10"><path d="M2.8 2.6V0.8H9.2V6.6H7.4" fill="none" stroke="#777" stroke-width="1.5"/><rect x="0.8" y="3" width="6.4" height="6.2" fill="none" stroke="#777" stroke-width="1.5"/></svg>
<svg class="b" style="left:1346px;top:6px;" width="10" height="10" viewBox="0 0 10 10"><path d="M0.8 0.8L9.2 9.2M9.2 0.8L0.8 9.2" stroke="#777" stroke-width="2.2"/></svg>
<div class="b" style="left:0px;top:25px;width:59px;height:25px;background:#217346"></div>
<span class="t" style="left:18.5px;top:29.5px;line-height:16px;font-size:12.5px;color:#fff;transform:scaleX(0.833);">FILE</span>
<div class="b" style="left:0px;top:49px;width:1366px;height:1px;background:#d4d4d4"></div>
<div class="b" style="left:63px;top:25px;width:62px;height:25px;background:#fff;border:1px solid #d4d4d4;border-bottom:none;box-sizing:border-box"></div>
<span class="t" style="left:76px;top:29.5px;line-height:16px;font-size:12.5px;color:#217346;transform:scaleX(0.933);">HOME</span>
<span class="t" style="left:140px;top:29.5px;line-height:16px;font-size:12.5px;color:#444444;transform:scaleX(0.789);">INSERT</span>
<span class="t" style="left:205px;top:29.5px;line-height:16px;font-size:12.5px;color:#444444;transform:scaleX(0.857);">PAGE LAYOUT</span>
<span class="t" style="left:308px;top:29.5px;line-height:16px;font-size:12.5px;color:#444444;transform:scaleX(0.878);">FORMULAS</span>
<span class="t" style="left:398px;top:29.5px;line-height:16px;font-size:12.5px;color:#444444;transform:scaleX(0.889);">DATA</span>
<span class="t" style="left:455px;top:29.5px;line-height:16px;font-size:12.5px;color:#444444;transform:scaleX(0.811);">REVIEW</span>
<span class="t" style="left:524px;top:29.5px;line-height:16px;font-size:12.5px;color:#444444;transform:scaleX(0.845);">VIEW</span>
<span class="t" style="left:1329px;top:26.5px;line-height:16px;font-size:12.5px;color:#444444;transform:scaleX(1.098);">Sign in</span>
<div class="b" style="left:0px;top:142px;width:1366px;height:1px;background:#d4d4d4"></div>
<svg class="b" style="left:12px;top:56px;" width="31" height="33" viewBox="0 0 31 33">
<rect x="1" y="5" width="24" height="26.5" rx="1" fill="#e8c479"/>
<rect x="8.5" y="1" width="9" height="5" rx="1.8" fill="#6e6e6e"/>
<rect x="6.5" y="3.8" width="13" height="4.6" fill="#6e6e6e"/>
<rect x="11.5" y="2.2" width="3" height="2" fill="#fff"/>
<path d="M15.5 13H23.5L28.5 18V31.5H15.5Z" fill="#fff" stroke="#777" stroke-width="1"/>
<path d="M23.5 13V18H28.5" fill="none" stroke="#777" stroke-width="1"/></svg>
<span class="t" style="left:11px;top:91.0px;line-height:16px;font-size:12.5px;color:#444444;transform:scaleX(0.876);">Paste</span>
<svg class="b" style="left:22.0px;top:113.0px" width="5" height="3" viewBox="0 0 5 3"><path d="M0 0H5L2.5 3Z" fill="#777"/></svg>
<svg class="b" style="left:50px;top:57px;" width="15" height="14" viewBox="0 0 15 14">
<path d="M3.5 0.5L9.8 9M11.5 0.5L5.2 9" stroke="#606060" stroke-width="2" fill="none"/>
<circle cx="3.3" cy="10.8" r="2.3" fill="#fff" stroke="#4f7fb5" stroke-width="1.4"/>
<circle cx="11.7" cy="10.8" r="2.3" fill="#fff" stroke="#4f7fb5" stroke-width="1.4"/></svg>
<span class="t" style="left:68px;top:57.0px;line-height:16px;font-size:12.5px;color:#444444;transform:scaleX(0.977);">Cut</span>
<svg class="b" style="left:49px;top:80px;" width="16" height="15" viewBox="0 0 16 15">
<rect x="0.5" y="0.5" width="8" height="10" fill="#fff" stroke="#777"/>
<path d="M2 3.5H5M2 5.5H5M2 7.5H5" stroke="#888"/>
<rect x="6.5" y="3.5" width="8.5" height="11" fill="#fff" stroke="#777"/>
<path d="M8.5 7.5H13M8.5 9.5H13M8.5 11.5H13" stroke="#888"/></svg>
<span class="t" style="left:68px;top:80.0px;line-height:16px;font-size:12.5px;color:#444444;transform:scaleX(0.959);">Copy</span>
<svg class="b" style="left:105.5px;top:87.0px" width="5" height="3" viewBox="0 0 5 3"><path d="M0 0H5L2.5 3Z" fill="#777"/></svg>
<svg class="b" style="left:49px;top:103px;" width="17" height="15" viewBox="0 0 17 15">
<path d="M9 3L13 0.5L16 4L12.5 7Z" fill="#555"/>
<path d="M2 8.5L8.5 3.5L12 7.5L6.5 13.5Z" fill="#e8c479"/>
<path d="M0.5 10L5 14.5L3 15L0 12Z" fill="#d9a94a"/></svg>
<span class="t" style="left:68px;top:102.5px;line-height:16px;font-size:12.5px;color:#444444;transform:scaleX(0.943);">Format Painter</span>
<span class="t" style="left:45.5px;top:125.5px;line-height:16px;font-size:12.5px;color:#6a6a6a;transform:scaleX(0.934);">Clipboard</span>
<svg class="b" style="left:145.5px;top:131px;" width="8" height="8" viewBox="0 0 8 8"><path d="M0.5 6V0.5H6" fill="none" stroke="#777"/><path d="M3 3L7 7M7 3.8V7H3.8" fill="none" stroke="#777"/></svg>
<div class="b" style="left:157px;top:55px;width:1px;height:86px;background:#e3e3e3"></div>
<div class="b" style="left:162px;top:61px;width:111px;height:23px;border:1px solid #c6c6c6;box-sizing:border-box;background:#fff"></div>
<span class="t" style="left:165px;top:65.0px;line-height:16px;font-size:12.5px;color:#333;transform:scaleX(0.901);">B Nazanin</span>
<svg class="b" style="left:262.5px;top:71.5px" width="5" height="3" viewBox="0 0 5 3"><path d="M0 0H5L2.5 3Z" fill="#777"/></svg>
<div class="b" style="left:273px;top:61px;width:43px;height:23px;border:1px solid #c6c6c6;box-sizing:border-box;background:#fff"></div>
<span class="t" style="left:276px;top:65.0px;line-height:16px;font-size:12.5px;color:#333;transform:scaleX(0.770);">11</span>
<svg class="b" style="left:305.5px;top:71.5px" width="5" height="3" viewBox="0 0 5 3"><path d="M0 0H5L2.5 3Z" fill="#777"/></svg>
<span class="t" style="left:322px;top:64.0px;line-height:18px;font-size:14px;color:#555;transform:scaleX(1.070);">A</span>
<svg class="b" style="left:330px;top:65px;" width="5" height="3" viewBox="0 0 5 3"><path d="M0 3L2.5 0L5 3Z" fill="#4a78b0"/></svg>
<span class="t" style="left:345px;top:66.5px;line-height:15px;font-size:11.5px;color:#555;transform:scaleX(1.043);">A</span>
<svg class="b" style="left:352px;top:65px;" width="5" height="3" viewBox="0 0 5 3"><path d="M0 0L2.5 3L5 0Z" fill="#4a78b0"/></svg>
<span class="t" style="left:168px;top:94.5px;line-height:16px;font-size:12.5px;color:#444;font-weight:700;transform:scaleX(0.886);">B</span>
<span class="t" style="left:192px;top:94.5px;line-height:16px;font-size:12.5px;color:#444;font-family:'Liberation Serif',serif;font-style:italic;transform:scaleX(1.199);">I</span>
<span class="t" style="left:212px;top:94.0px;line-height:16px;font-size:12px;color:#444;transform:scaleX(0.923);text-decoration:underline">U</span>
<svg class="b" style="left:230.5px;top:101.5px" width="5" height="3" viewBox="0 0 5 3"><path d="M0 0H5L2.5 3Z" fill="#777"/></svg>
<div class="b" style="left:244px;top:92px;width:1px;height:22px;background:#e3e3e3"></div>
<svg class="b" style="left:252px;top:96px;" width="14" height="14" viewBox="0 0 14 14"><path d="M0 0.5H14M0 6.5H14M0.5 0V13M6.5 0V13M12.5 0V13" stroke="#777" stroke-dasharray="1 1" fill="none"/><path d="M0 13.5H13" stroke="#555"/></svg>
<svg class="b" style="left:273.5px;top:101.5px" width="5" height="3" viewBox="0 0 5 3"><path d="M0 0H5L2.5 3Z" fill="#777"/></svg>
<div class="b" style="left:287px;top:92px;width:1px;height:22px;background:#e3e3e3"></div>
<svg class="b" style="left:295px;top:94px;" width="17" height="18" viewBox="0 0 17 18">
<path d="M6.5 2.5L13 9L7.5 12.5L2.5 7Z" fill="#fff" stroke="#555" stroke-width="1.1"/>
<path d="M6.5 2.5V0.8" stroke="#555"/>
<path d="M13.2 8C15.2 9 15.8 10.5 15 12.5C14 11.5 13.2 10 13.2 8Z" fill="#3a76b8"/>
<rect x="1" y="13.5" width="15" height="3.8" fill="#ffff00"/></svg>
<svg class="b" style="left:316.5px;top:101.5px" width="5" height="3" viewBox="0 0 5 3"><path d="M0 0H5L2.5 3Z" fill="#777"/></svg>
<span class="t" style="left:331px;top:92.5px;line-height:17px;font-size:13px;color:#555;transform:scaleX(1.153);">A</span>
<div class="b" style="left:329px;top:107.5px;width:15px;height:4px;background:#e81123"></div>
<svg class="b" style="left:350.5px;top:101.5px" width="5" height="3" viewBox="0 0 5 3"><path d="M0 0H5L2.5 3Z" fill="#777"/></svg>
<span class="t" style="left:241px;top:125.5px;line-height:16px;font-size:12.5px;color:#6a6a6a;transform:scaleX(0.919);">Font</span>
<svg class="b" style="left:352.5px;top:131px;" width="8" height="8" viewBox="0 0 8 8"><path d="M0.5 6V0.5H6" fill="none" stroke="#777"/><path d="M3 3L7 7M7 3.8V7H3.8" fill="none" stroke="#777"/></svg>
<div class="b" style="left:364px;top:55px;width:1px;height:86px;background:#e3e3e3"></div>
<svg class="b" style="left:373px;top:64px;" width="14" height="8" viewBox="0 0 14 8"><rect x="0" y="0" width="14" height="1" fill="#666"/><rect x="0" y="3" width="14" height="1" fill="#666"/><rect x="0" y="6" width="14" height="1" fill="#666"/></svg>
<div class="b" style="left:391px;top:61px;width:22px;height:23px;background:#9fd5b7"></div>
<svg class="b" style="left:395px;top:68px;" width="14" height="8" viewBox="0 0 14 8"><rect x="0" y="0" width="14" height="1" fill="#666"/><rect x="0" y="3" width="14" height="1" fill="#666"/><rect x="0" y="6" width="14" height="1" fill="#666"/></svg>
<svg class="b" style="left:417px;top:73px;" width="14" height="8" viewBox="0 0 14 8"><rect x="0" y="0" width="14" height="1" fill="#666"/><rect x="0" y="3" width="14" height="1" fill="#666"/><rect x="0" y="6" width="14" height="1" fill="#666"/></svg>
<div class="b" style="left:439px;top:61px;width:1px;height:22px;background:#e3e3e3"></div>
<svg class="b" style="left:445px;top:62px;" width="20" height="20" viewBox="0 0 20 20"><g transform="rotate(-45 8.5 9)"><text x="2.5" y="12" font-size="10.5" font-family="Liberation Sans,sans-serif" fill="#444">ab</text></g>
<path d="M7 17.5L16.5 8" stroke="#555" stroke-width="1.3"/><path d="M18 6.5L13.2 7.8L16.7 11.3Z" fill="#555"/></svg>
<svg class="b" style="left:467.0px;top:71.0px" width="5" height="3" viewBox="0 0 5 3"><path d="M0 0H5L2.5 3Z" fill="#777"/></svg>
<div class="b" style="left:481px;top:61px;width:1px;height:22px;background:#e3e3e3"></div>
<svg class="b" style="left:490px;top:67px;" width="14" height="10" viewBox="0 0 14 10"><path d="M0.5 1L5 4.5L0.5 8Z" fill="#4a78b0"/>
<path d="M8.5 1H13M9.6 1V8.8M12 1V8.8" stroke="#555" stroke-width="1.3" fill="none"/><path d="M9.6 0.4A2.6 2.6 0 0 0 9.6 5.6Z" fill="#555"/></svg>
<svg class="b" style="left:510.5px;top:71.0px" width="5" height="3" viewBox="0 0 5 3"><path d="M0 0H5L2.5 3Z" fill="#777"/></svg>
<div class="b" style="left:524px;top:60px;width:1px;height:56px;background:#e3e3e3"></div>
<div class="b" style="left:529px;top:61px;width:81px;height:23px;background:#9fd5b7"></div>
<svg class="b" style="left:532px;top:64px;" width="17" height="16" viewBox="0 0 17 16">
<rect x="0.5" y="1.5" width="10" height="5" fill="#fff" stroke="#666"/>
<path d="M2 4H8" stroke="#888"/>
<rect x="0.5" y="8.5" width="8.5" height="6" fill="#fff" stroke="#666"/>
<path d="M2 10.5H7.5M2 12.5H7.5" stroke="#888"/>
<path d="M11.5 2.5H13A2.6 2.6 0 0 1 13 8.5H11.5" fill="none" stroke="#3f7f8f" stroke-width="1.3"/>
<path d="M9.8 8.5L12.8 6V11Z" fill="#3f7f8f"/></svg>
<span class="t" style="left:551.5px;top:65.0px;line-height:16px;font-size:12.5px;color:#444444;transform:scaleX(0.923);">Wrap Text</span>
<svg class="b" style="left:373px;top:98px;" width="14" height="11" viewBox="0 0 14 11"><rect x="0" y="0" width="14" height="1" fill="#666"/><rect x="0" y="3" width="9" height="1" fill="#666"/><rect x="0" y="6" width="14" height="1" fill="#666"/><rect x="0" y="9" width="9" height="1" fill="#666"/></svg>
<div class="b" style="left:391px;top:92px;width:22px;height:23px;background:#9fd5b7"></div>
<svg class="b" style="left:395px;top:98px;" width="14" height="11" viewBox="0 0 14 11"><rect x="0.0" y="0" width="14" height="1" fill="#666"/><rect x="3.0" y="3" width="8" height="1" fill="#666"/><rect x="0.0" y="6" width="14" height="1" fill="#666"/><rect x="3.0" y="9" width="8" height="1" fill="#666"/></svg>
<svg class="b" style="left:417px;top:98px;" width="14" height="11" viewBox="0 0 14 11"><rect x="0" y="0" width="14" height="1" fill="#666"/><rect x="5" y="3" width="9" height="1" fill="#666"/><rect x="0" y="6" width="14" height="1" fill="#666"/><rect x="5" y="9" width="9" height="1" fill="#666"/></svg>
<div class="b" style="left:439px;top:92px;width:1px;height:22px;background:#e3e3e3"></div>
<svg class="b" style="left:447px;top:98px;" width="16" height="11" viewBox="0 0 16 11"><rect x="3" y="0" width="13" height="1" fill="#666"/><rect x="7" y="3" width="9" height="1" fill="#666"/><rect x="7" y="6" width="9" height="1" fill="#666"/><rect x="3" y="9" width="13" height="1" fill="#666"/><path d="M0 5H5.5" stroke="#3f6fb0" stroke-width="1.8"/><path d="M3 2L6.3 5L3 8" fill="none" stroke="#3f6fb0" stroke-width="1.8"/></svg>
<svg class="b" style="left:469px;top:98px;" width="16" height="11" viewBox="0 0 16 11"><rect x="3" y="0" width="13" height="1" fill="#666"/><rect x="7" y="3" width="9" height="1" fill="#666"/><rect x="7" y="6" width="9" height="1" fill="#666"/><rect x="3" y="9" width="13" height="1" fill="#666"/><path d="M1 5H6.5" stroke="#3f6fb0" stroke-width="1.8"/><path d="M3.6 2L0.4 5L3.6 8" fill="none" stroke="#3f6fb0" stroke-width="1.8"/></svg>
<svg class="b" style="left:532px;top:95px;" width="15" height="15" viewBox="0 0 15 15"><rect x="0.5" y="0.5" width="14" height="14" fill="#fff" stroke="#666"/>
<path d="M0.5 3.5H14.5M0.5 11.5H14.5M5 0.5V3.5M10 0.5V3.5M5 11.5V14.5M10 11.5V14.5" stroke="#666" fill="none"/>
<path d="M3 7.5H12" stroke="#666"/><path d="M4.5 5.8L2.5 7.5L4.5 9.2M10.5 5.8L12.5 7.5L10.5 9.2" fill="none" stroke="#666"/></svg>
<span class="t" style="left:551.5px;top:95.5px;line-height:16px;font-size:12.5px;color:#444444;transform:scaleX(0.958);">Merge &amp; Center</span>
<svg class="b" style="left:645.5px;top:102.0px" width="5" height="3" viewBox="0 0 5 3"><path d="M0 0H5L2.5 3Z" fill="#777"/></svg>
<span class="t" style="left:478px;top:125.5px;line-height:16px;font-size:12.5px;color:#6a6a6a;transform:scaleX(0.953);">Alignment</span>
<svg class="b" style="left:648.5px;top:131px;" width="8" height="8" viewBox="0 0 8 8"><path d="M0.5 6V0.5H6" fill="none" stroke="#777"/><path d="M3 3L7 7M7 3.8V7H3.8" fill="none" stroke="#777"/></svg>
<div class="b" style="left:660px;top:55px;width:1px;height:86px;background:#e3e3e3"></div>
<div class="b" style="left:665px;top:61px;width:131px;height:23px;border:1px solid #c6c6c6;box-sizing:border-box;background:#fff"></div>
<span class="t" style="left:669px;top:65.0px;line-height:16px;font-size:12.5px;color:#333;transform:scaleX(0.877);">General</span>
<svg class="b" style="left:785.5px;top:71.5px" width="5" height="3" viewBox="0 0 5 3"><path d="M0 0H5L2.5 3Z" fill="#777"/></svg>
<svg class="b" style="left:667px;top:95px;" width="18" height="16" viewBox="0 0 18 16">
<rect x="1.5" y="0.8" width="14.5" height="7.5" fill="#fff" stroke="#3f6fa8" stroke-width="1.5"/>
<circle cx="8.7" cy="4.5" r="1.9" fill="#3f6fa8"/>
<ellipse cx="12" cy="10" rx="4" ry="1.6" fill="#e8c479" stroke="#c99a3b" stroke-width="0.6"/>
<ellipse cx="11" cy="12.3" rx="4" ry="1.6" fill="#e8c479" stroke="#c99a3b" stroke-width="0.6"/>
<ellipse cx="10" cy="14.3" rx="4" ry="1.5" fill="#e8c479" stroke="#c99a3b" stroke-width="0.6"/></svg>
<svg class="b" style="left:689.5px;top:102.0px" width="5" height="3" viewBox="0 0 5 3"><path d="M0 0H5L2.5 3Z" fill="#777"/></svg>
<span class="t" style="left:704px;top:94.0px;line-height:18px;font-size:14px;color:#555;transform:scaleX(1.044);">%</span>
<span class="t" style="left:729.5px;top:84.5px;line-height:23px;font-size:18px;color:#555;font-weight:700;font-family:'Liberation Serif',serif;">,</span>
<div class="b" style="left:747px;top:92px;width:1px;height:22px;background:#e3e3e3"></div>
<svg class="b" style="left:754px;top:95px" width="16" height="16" viewBox="0 0 16 16"><path d="M1 3.5H6" stroke="#3a76b8" stroke-width="1.2"/><path d="M3.2 1.3L0.8 3.5L3.2 5.7" fill="none" stroke="#3a76b8" stroke-width="1.2"/><text x="7" y="6.5" font-size="8.5" font-family="Liberation Sans,sans-serif" fill="#444">.0</text><text x="2.5" y="14.5" font-size="8.5" font-family="Liberation Sans,sans-serif" fill="#444">.00</text></svg>
<svg class="b" style="left:776px;top:95px" width="16" height="16" viewBox="0 0 16 16"><text x="2.5" y="6.5" font-size="8.5" font-family="Liberation Sans,sans-serif" fill="#444">.00</text><path d="M1 11.5H6" stroke="#3a76b8" stroke-width="1.2"/><path d="M3.8 9.3L6.2 11.5L3.8 13.7" fill="none" stroke="#3a76b8" stroke-width="1.2"/><text x="7" y="14.5" font-size="8.5" font-family="Liberation Sans,sans-serif" fill="#444">.0</text></svg>
<span class="t" style="left:702px;top:125.5px;line-height:16px;font-size:12.5px;color:#6a6a6a;transform:scaleX(0.922);">Number</span>
<svg class="b" style="left:788px;top:131px;" width="8" height="8" viewBox="0 0 8 8"><path d="M0.5 6V0.5H6" fill="none" stroke="#777"/><path d="M3 3L7 7M7 3.8V7H3.8" fill="none" stroke="#777"/></svg>
<div class="b" style="left:800px;top:55px;width:1px;height:86px;background:#e3e3e3"></div>
<svg class="b" style="left:826px;top:58px;" width="31" height="31" viewBox="0 0 31 31">
<rect x="0.5" y="0.5" width="27" height="24" fill="#fff" stroke="#9a9a9a"/>
<path d="M0.5 6.5H27.5M0.5 12.5H27.5M0.5 18.5H27.5M7 0.5V24.5M14 0.5V24.5M21 0.5V24.5" stroke="#b5b5b5" fill="none"/>
<rect x="7" y="1" width="7" height="5.5" fill="#d8643c"/>
<rect x="7" y="7" width="12" height="5.5" fill="#3a76b8"/>
<rect x="7" y="13" width="5" height="5.5" fill="#d8643c"/>
<rect x="7" y="19" width="4" height="5.5" fill="#3a76b8"/>
<rect x="14.5" y="17.5" width="15" height="12" fill="#fff" stroke="#666"/>
<path d="M18 21.8H26M18 25.2H26M24.5 19.5L19.5 27.5" stroke="#444" stroke-width="1.1"/></svg>
<span class="t" style="left:810px;top:90.5px;line-height:16px;font-size:12.5px;color:#444444;transform:scaleX(0.975);">Conditional</span>
<span class="t" style="left:807px;top:107.0px;line-height:16px;font-size:12.5px;color:#444444;transform:scaleX(0.987);">Formatting</span>
<svg class="b" style="left:868.5px;top:113.2px" width="5" height="3" viewBox="0 0 5 3"><path d="M0 0H5L2.5 3Z" fill="#777"/></svg>
<svg class="b" style="left:891px;top:58px;" width="31" height="31" viewBox="0 0 31 31">
<rect x="0.5" y="2.5" width="25" height="20" fill="#fff" stroke="#9a9a9a"/>
<rect x="7" y="7.5" width="18" height="15" fill="#b8cde6"/>
<path d="M0.5 7.5H25.5M0.5 12.5H25.5M0.5 17.5H25.5M7 2.5V22.5M13 2.5V22.5M19 2.5V22.5" stroke="#a8a8a8" fill="none"/>
<path d="M28.5 4.5L31 8.5L20.5 21.5L16 18.5Z" fill="#6b6b6b"/>
<path d="M15.5 18.5L20.5 22C19 27.5 13 30.5 6 29.5C10.5 27 12.5 23.5 15.5 18.5Z" fill="#3a76b8"/>
<path d="M12 25L16.5 27.5" stroke="#fff" stroke-width="1.3"/></svg>
<span class="t" style="left:879px;top:90.5px;line-height:16px;font-size:12.5px;color:#444444;transform:scaleX(0.924);">Format as</span>
<span class="t" style="left:888.5px;top:107.0px;line-height:16px;font-size:12.5px;color:#444444;transform:scaleX(0.920);">Table</span>
<svg class="b" style="left:917.5px;top:113.2px" width="5" height="3" viewBox="0 0 5 3"><path d="M0 0H5L2.5 3Z" fill="#777"/></svg>
<svg class="b" style="left:941px;top:58px;" width="31" height="31" viewBox="0 0 31 31">
<rect x="0.5" y="2.5" width="25" height="20" fill="#fff" stroke="#9a9a9a"/>
<path d="M0.5 7.5H25.5M0.5 17.5H25.5M6 2.5V22.5M20 2.5V22.5" stroke="#a8a8a8" fill="none"/>
<rect x="6" y="7.5" width="14" height="10" fill="#b8cde6" stroke="#8aa6c8"/>
<path d="M28.5 4.5L31 8.5L20.5 21.5L16 18.5Z" fill="#6b6b6b"/>
<path d="M15.5 18.5L20.5 22C19 27.5 13 30.5 6 29.5C10.5 27 12.5 23.5 15.5 18.5Z" fill="#3a76b8"/>
<path d="M12 25L16.5 27.5" stroke="#fff" stroke-width="1.3"/></svg>
<span class="t" style="left:945px;top:90.5px;line-height:16px;font-size:12.5px;color:#444444;transform:scaleX(0.882);">Cell</span>
<span class="t" style="left:936px;top:107.0px;line-height:16px;font-size:12.5px;color:#444444;transform:scaleX(0.911);">Styles</span>
<svg class="b" style="left:968.5px;top:113.2px" width="5" height="3" viewBox="0 0 5 3"><path d="M0 0H5L2.5 3Z" fill="#777"/></svg>
<span class="t" style="left:876px;top:125.5px;line-height:16px;font-size:12.5px;color:#6a6a6a;transform:scaleX(0.822);">Styles</span>
<div class="b" style="left:981px;top:55px;width:1px;height:86px;background:#e3e3e3"></div>
<svg class="b" style="left:993px;top:58px;" width="28" height="28" viewBox="0 0 28 28">
<rect x="1.5" y="0.5" width="7.5" height="5" fill="#fff" stroke="#777"/><rect x="9" y="0.5" width="7.5" height="5" fill="#fff" stroke="#777"/>
<rect x="13.5" y="8.5" width="6.5" height="5" fill="#b8cde6" stroke="#7f93ad"/><rect x="20" y="8.5" width="6.5" height="5" fill="#b8cde6" stroke="#7f93ad"/>
<path d="M3 11H10.5" stroke="#3f6fa8" stroke-width="1.8"/><path d="M6 7.8L2.5 11L6 14.2" fill="none" stroke="#3f6fa8" stroke-width="1.8"/>
<rect x="1.5" y="16.5" width="15" height="10" fill="#fff" stroke="#777"/><path d="M9 16.5V26.5M1.5 21.5H16.5" stroke="#777"/></svg>
<span class="t" style="left:992.5px;top:90.5px;line-height:16px;font-size:12.5px;color:#444444;transform:scaleX(0.912);">Insert</span>
<svg class="b" style="left:1004.5px;top:113.2px" width="5" height="3" viewBox="0 0 5 3"><path d="M0 0H5L2.5 3Z" fill="#777"/></svg>
<svg class="b" style="left:1035px;top:58px;" width="30" height="28" viewBox="0 0 30 28">
<rect x="0.5" y="0.5" width="7.5" height="5" fill="#fff" stroke="#777"/><rect x="8" y="0.5" width="7.5" height="5" fill="#fff" stroke="#777"/>
<rect x="6.5" y="8.5" width="8" height="5" fill="#b8cde6" stroke="#7f93ad"/>
<rect x="0.5" y="16.5" width="15" height="10" fill="#fff" stroke="#777"/><path d="M8 16.5V26.5M0.5 21.5H15.5" stroke="#777"/>
<path d="M16.5 5.5L29 18M29 5.5L16.5 18" stroke="#d8533b" stroke-width="1.8"/></svg>
<span class="t" style="left:1032px;top:90.5px;line-height:16px;font-size:12.5px;color:#444444;transform:scaleX(0.913);">Delete</span>
<svg class="b" style="left:1046.5px;top:113.2px" width="5" height="3" viewBox="0 0 5 3"><path d="M0 0H5L2.5 3Z" fill="#777"/></svg>
<svg class="b" style="left:1076px;top:57px;" width="30" height="30" viewBox="0 0 30 30">
<path d="M1 3.5H29M1 1V6M29 1V6" stroke="#3a76b8" stroke-width="1.1" fill="none"/><path d="M4.5 1.3L1.8 3.5L4.5 5.7M25.5 1.3L28.2 3.5L25.5 5.7" fill="none" stroke="#3a76b8" stroke-width="1.1"/>
<rect x="2.5" y="8.5" width="24" height="15" fill="#fff" stroke="#999"/>
<path d="M8.5 8.5V23.5M14.5 8.5V23.5M20.5 8.5V23.5M2.5 13.5H26.5M2.5 18.5H26.5" stroke="#aaa" fill="none"/>
<rect x="10.5" y="11" width="6" height="9" fill="#3a76b8"/>
<path d="M2.5 23.5V28L8 29L9 26.5H13L14 29H22L26.5 27V23.5" fill="none" stroke="#888"/></svg>
<span class="t" style="left:1072px;top:90.5px;line-height:16px;font-size:12.5px;color:#444444;transform:scaleX(0.947);">Format</span>
<svg class="b" style="left:1088.5px;top:113.2px" width="5" height="3" viewBox="0 0 5 3"><path d="M0 0H5L2.5 3Z" fill="#777"/></svg>
<span class="t" style="left:1038px;top:125.5px;line-height:16px;font-size:12.5px;color:#6a6a6a;transform:scaleX(0.827);">Cells</span>
<div class="b" style="left:1117px;top:55px;width:1px;height:86px;background:#e3e3e3"></div>
<svg class="b" style="left:1125px;top:56px;" width="15" height="15" viewBox="0 0 15 15"><path d="M13.5 3.2V1H1.5L7.5 7.5L1.5 14H13.5V11.8" fill="none" stroke="#3a3a3a" stroke-width="2"/></svg>
<span class="t" style="left:1144.5px;top:56.5px;line-height:16px;font-size:12.5px;color:#444444;transform:scaleX(0.953);">AutoSum</span>
<svg class="b" style="left:1204.5px;top:63.5px" width="5" height="3" viewBox="0 0 5 3"><path d="M0 0H5L2.5 3Z" fill="#777"/></svg>
<svg class="b" style="left:1126px;top:79px;" width="15" height="15" viewBox="0 0 15 15"><rect x="0.5" y="0.5" width="14" height="14" fill="#fff" stroke="#777"/><rect x="0.5" y="0.5" width="14" height="3" fill="#555"/><path d="M7.5 5V11.5" stroke="#3a76b8" stroke-width="1.8"/><path d="M4 8.5L7.5 12L11 8.5" fill="none" stroke="#3a76b8" stroke-width="1.8"/></svg>
<span class="t" style="left:1144.5px;top:79.5px;line-height:16px;font-size:12.5px;color:#444444;transform:scaleX(0.877);">Fill</span>
<svg class="b" style="left:1162.5px;top:86.5px" width="5" height="3" viewBox="0 0 5 3"><path d="M0 0H5L2.5 3Z" fill="#777"/></svg>
<svg class="b" style="left:1126px;top:103px;" width="16" height="14" viewBox="0 0 16 14"><path d="M9.5 1L15 6L8.5 12.5H4.5L1.5 9.5Z" fill="#f0a3b2" stroke="#d86a80" stroke-width="0.8"/><path d="M5 5.5L11 11" stroke="#fff" stroke-width="1"/><path d="M3 13.5H15" stroke="#d86a80"/></svg>
<span class="t" style="left:1144.5px;top:102.5px;line-height:16px;font-size:12.5px;color:#444444;transform:scaleX(0.887);">Clear</span>
<svg class="b" style="left:1174.5px;top:109.5px" width="5" height="3" viewBox="0 0 5 3"><path d="M0 0H5L2.5 3Z" fill="#777"/></svg>
<svg class="b" style="left:1219px;top:57px" width="32" height="30" viewBox="0 0 32 30"><text x="1" y="13.8" font-size="15.5" font-family="Liberation Sans,sans-serif" fill="#3f6fb0" stroke="#3f6fb0" stroke-width="0.35">A</text><text x="1.8" y="27.7" font-size="15.5" font-family="Liberation Sans,sans-serif" fill="#9a64b0" stroke="#9a64b0" stroke-width="0.35">Z</text><path d="M13.3 9H30L23.6 16V23.5L20 21.5V16Z" fill="#7a7a7a"/></svg>
<span class="t" style="left:1218.5px;top:90.5px;line-height:16px;font-size:12.5px;color:#444444;transform:scaleX(0.950);">Sort &amp;</span>
<span class="t" style="left:1218.5px;top:107.0px;line-height:16px;font-size:12.5px;color:#444444;transform:scaleX(0.954);">Filter</span>
<svg class="b" style="left:1248.0px;top:113.2px" width="5" height="3" viewBox="0 0 5 3"><path d="M0 0H5L2.5 3Z" fill="#777"/></svg>
<svg class="b" style="left:1265px;top:60px;" width="27" height="23" viewBox="0 0 29 26">
<rect x="4.5" y="0.5" width="6" height="6" fill="#6e6e6e"/><rect x="18.5" y="0.5" width="6" height="6" fill="#6e6e6e"/>
<path d="M3.5 6H11.5L12.5 24H0.5Z" fill="#6e6e6e"/><path d="M17.5 6H25.5L28.5 24H16.5Z" fill="#6e6e6e"/>
<rect x="11" y="8" width="7" height="7" fill="#6e6e6e"/>
<path d="M2.5 12.5V21.5M19 12.5V21.5" stroke="#a9a9a9" stroke-width="1.5"/></svg>
<span class="t" style="left:1261px;top:90.5px;line-height:16px;font-size:12.5px;color:#444444;transform:scaleX(0.941);">Find &amp;</span>
<span class="t" style="left:1258.5px;top:107.0px;line-height:16px;font-size:12.5px;color:#444444;transform:scaleX(0.892);">Select</span>
<svg class="b" style="left:1292.0px;top:113.2px" width="5" height="3" viewBox="0 0 5 3"><path d="M0 0H5L2.5 3Z" fill="#777"/></svg>
<span class="t" style="left:1192px;top:125.5px;line-height:16px;font-size:12.5px;color:#6a6a6a;transform:scaleX(0.968);">Editing</span>
<div class="b" style="left:1304px;top:55px;width:1px;height:86px;background:#e3e3e3"></div>
<svg class="b" style="left:1347px;top:130px;" width="10" height="7" viewBox="0 0 10 7"><path d="M1 6L5 1.5L9 6" fill="none" stroke="#555" stroke-width="1.8"/></svg>
<div class="b" style="left:5px;top:153px;width:102px;height:26px;border:1px solid #c6c6c6;box-sizing:border-box;background:#fff"></div>
<span class="t" style="left:12px;top:158.0px;line-height:16px;font-size:12.5px;color:#444;transform:scaleX(1.015);">Q17</span>
<svg class="b" style="left:93.0px;top:163.0px" width="7" height="4" viewBox="0 0 7 4"><path d="M0 0H7L3.5 4Z" fill="#666"/></svg>
<div class="b" style="left:122px;top:160px;width:1px;height:2px;background:#aaa"></div>
<div class="b" style="left:122px;top:164px;width:1px;height:2px;background:#aaa"></div>
<div class="b" style="left:122px;top:168px;width:1px;height:2px;background:#aaa"></div>
<div class="b" style="left:137px;top:153px;width:110px;height:26px;border:1px solid #d4d4d4;box-sizing:border-box;background:#fff"></div>
<svg class="b" style="left:148px;top:158px;" width="16" height="16" viewBox="0 0 16 16"><path d="M1.5 1.5L14.5 14.5M14.5 1.5L1.5 14.5" stroke="#c6c6c6" stroke-width="2"/></svg>
<svg class="b" style="left:183px;top:158px;" width="20" height="16" viewBox="0 0 20 16"><path d="M2 9L7.5 14L18 2" fill="none" stroke="#c6c6c6" stroke-width="2.6"/></svg>
<span class="t" style="left:219px;top:152.0px;line-height:26px;font-size:20px;color:#777;font-family:'Liberation Serif',serif;font-style:italic;transform:scaleX(1.247);">fx</span>
<div class="b" style="left:251px;top:153px;width:1111px;height:26px;border:1px solid #d4d4d4;box-sizing:border-box;background:#fff"></div>
<svg class="b" style="left:1347px;top:162px;" width="13" height="9" viewBox="0 0 13 9"><path d="M1.5 1.5L6.5 6.5L11.5 1.5" fill="none" stroke="#555" stroke-width="2.6"/></svg>
</body>
</html>
